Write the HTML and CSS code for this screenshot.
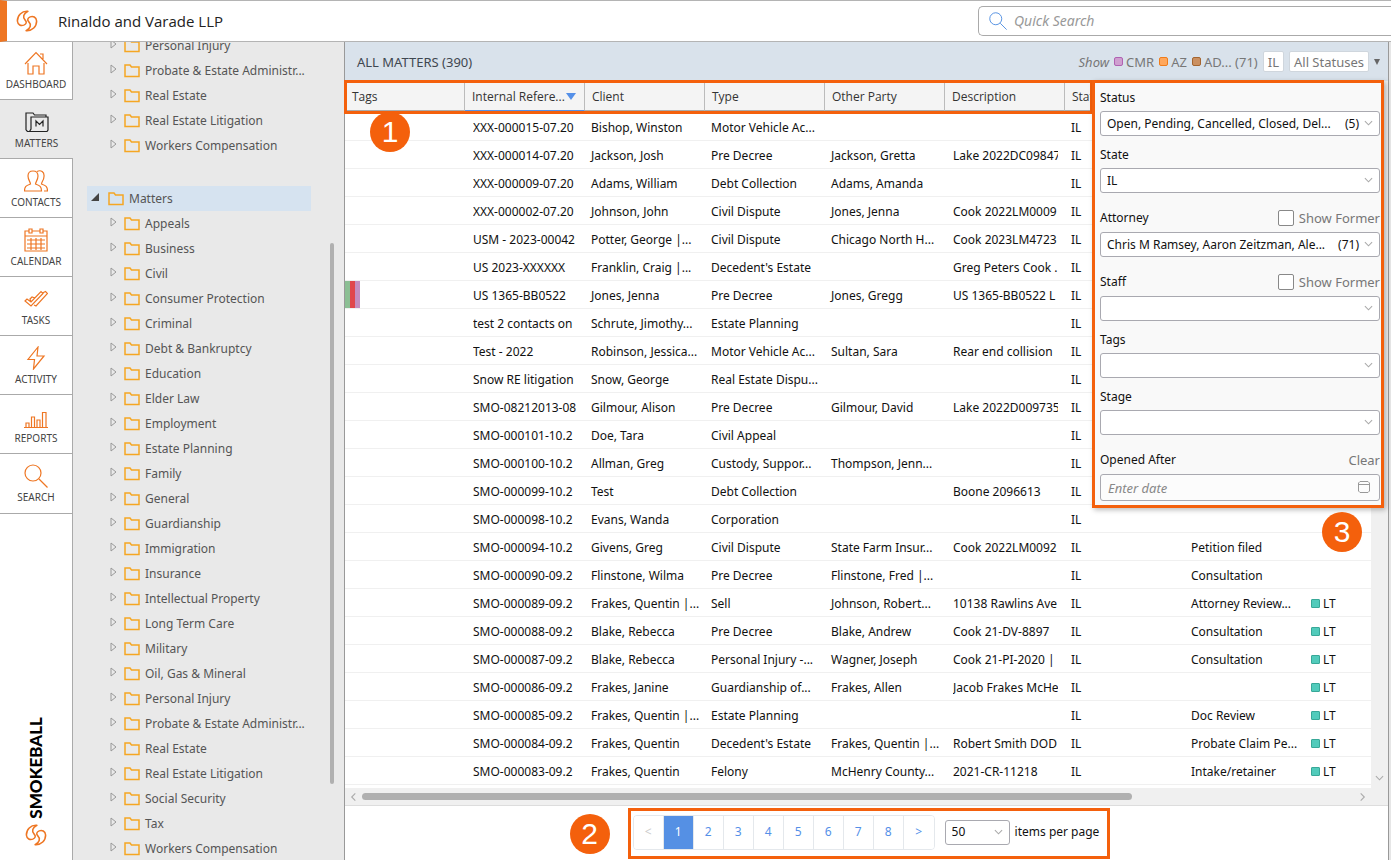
FILE: index.html
```html
<!DOCTYPE html>
<html lang="en">
<head>
<meta charset="utf-8">
<title>Matters - Rinaldo and Varade LLP</title>
<link rel="stylesheet" href="styles.css">
</head>
<body>
<svg class="sprite" aria-hidden="true">
  <symbol id="logo" viewBox="0 0 24 24"><g fill="none" stroke="currentColor" stroke-width="1.7" stroke-linejoin="round"><path d="M13 1.500C6 1 1.500 6 1.500 12c.5 4.500 4 5.500 7 4.500 3-1.200 3.500-3.500 1.500-5.500C7 8 8 4 13 1.500z"/><path d="M11 22.500C18 23 22.500 18 22.500 12c-.5-4.500-4-5.500-7-4.500-3 1.200-3.500 3.500-1.500 5.500 3 3 2 7-3 9.500z"/></g></symbol>
  <symbol id="folder" viewBox="0 0 16 14"><path d="M1 12.500V1h5l1.500 2H15v9.500z" fill="none" stroke="#f5a623" stroke-width="1.500"/></symbol>
  <symbol id="closed" viewBox="0 0 7 10"><path d="M1 1v8l5-4z" fill="none" stroke="#999"/></symbol>
  <symbol id="chev" viewBox="0 0 10 6"><path d="M1 1l4 4 4-4" fill="none" stroke="#aaa" stroke-width="1.200"/></symbol>
  <symbol id="glass" viewBox="0 0 24 24"><g fill="none" stroke="currentColor" stroke-width="1.200"><circle cx="9" cy="9" r="8"/><path d="M15 15l8.500 8.500"/></g></symbol>
</svg>
<div class="app">
  <header class="topbar">
    <svg class="topbar-logo"><use href="#logo"/></svg>
    <h1 class="firm">Rinaldo and Varade LLP</h1>
    <label class="quick"><svg class="quick-icon"><use href="#glass"/></svg><input type="search" placeholder="Quick Search" aria-label="Quick Search"></label>
  </header>
  <div class="body">
    <nav class="rail">
      <a class="rail-item first" href="#"><svg viewBox="0 0 24 24"><path d="M1 13L12 1.500 23 13M16 3h3v5M4 12v11h5v-8h6v8h5V12"/></svg>DASHBOARD</a>
      <a class="rail-item active" href="#"><svg viewBox="0 0 24 24"><path d="M1 20V3h7l1.500 2H21v2M1 20l1.500 1.500H22L23 20V7H6v12l-1.500 2.500M11 16.500V11l3.500 3.500L18 11v5.500"/></svg>MATTERS</a>
      <a class="rail-item" href="#"><svg viewBox="0 0 24 24"><path d="M.5 22c0-5 2-5.500 6-7 0-2-2.500-4-2.500-8 0-3.500 2-5 5-5s5 1.500 5 5c0 4-2.500 6-2.500 8 4 1.500 6 2 6 7zM13 2.500c4-2 7.500.5 7 5 0 3.500-2.500 5.500-2.500 7.500 4 1.500 6 2 6 7H20"/></svg>CONTACTS</a>
      <a class="rail-item" href="#"><svg viewBox="0 0 24 24"><path d="M5 3H1v20h22V3h-4M8 3h8M5 1h3v4H5zM16 1h3v4h-3zM1 8h22M3 12h18M3 16h18M3 20h18M7 10v12M12 10v12M17 10v12"/></svg>CALENDAR</a>
      <a class="rail-item" href="#"><svg viewBox="0 0 24 24"><path d="M1 14l2-2 4 3L17 4.500l2 2L7 19zM7 15l-1-3 2-2 3 1M10 18l2 1L23.500 6.500l-2-2-3 1.500"/></svg>TASKS</a>
      <a class="rail-item" href="#"><svg viewBox="0 0 24 24"><path d="M14 1L4 13.500h6.500L9.500 23 20 10h-7z"/></svg>ACTIVITY</a>
      <a class="rail-item" href="#"><svg viewBox="0 0 24 24"><path d="M0 22.500h24M2 22v-4h3v4M7.500 22V12h3v10M13 22v-7h3v7M18.500 22V7.500h3.500V22"/></svg>REPORTS</a>
      <a class="rail-item last" href="#"><svg viewBox="0 0 24 24"><circle cx="9" cy="9" r="8"/><path d="M15 15l8.500 8.500"/></svg>SEARCH</a>
      <div class="brand"><span class="brand-name">SMOKEBALL</span><svg class="brand-logo"><use href="#logo"/></svg></div>
    </nav>
    <aside class="side">
      <div class="tree">
        <ul class="branch cut">
          <li><svg class="tri"><use href="#closed"/></svg><svg class="fold"><use href="#folder"/></svg>Personal Injury</li>
          <li><svg class="tri"><use href="#closed"/></svg><svg class="fold"><use href="#folder"/></svg>Probate &amp; Estate Administr...</li>
          <li><svg class="tri"><use href="#closed"/></svg><svg class="fold"><use href="#folder"/></svg>Real Estate</li>
          <li><svg class="tri"><use href="#closed"/></svg><svg class="fold"><use href="#folder"/></svg>Real Estate Litigation</li>
          <li><svg class="tri"><use href="#closed"/></svg><svg class="fold"><use href="#folder"/></svg>Workers Compensation</li>
        </ul>
        <div class="root"><svg class="tri open" viewBox="0 0 8 8"><path d="M8 0v8H0z" fill="#444"/></svg><svg class="fold"><use href="#folder"/></svg>Matters</div>
        <ul class="branch">
          <li><svg class="tri"><use href="#closed"/></svg><svg class="fold"><use href="#folder"/></svg>Appeals</li>
          <li><svg class="tri"><use href="#closed"/></svg><svg class="fold"><use href="#folder"/></svg>Business</li>
          <li><svg class="tri"><use href="#closed"/></svg><svg class="fold"><use href="#folder"/></svg>Civil</li>
          <li><svg class="tri"><use href="#closed"/></svg><svg class="fold"><use href="#folder"/></svg>Consumer Protection</li>
          <li><svg class="tri"><use href="#closed"/></svg><svg class="fold"><use href="#folder"/></svg>Criminal</li>
          <li><svg class="tri"><use href="#closed"/></svg><svg class="fold"><use href="#folder"/></svg>Debt &amp; Bankruptcy</li>
          <li><svg class="tri"><use href="#closed"/></svg><svg class="fold"><use href="#folder"/></svg>Education</li>
          <li><svg class="tri"><use href="#closed"/></svg><svg class="fold"><use href="#folder"/></svg>Elder Law</li>
          <li><svg class="tri"><use href="#closed"/></svg><svg class="fold"><use href="#folder"/></svg>Employment</li>
          <li><svg class="tri"><use href="#closed"/></svg><svg class="fold"><use href="#folder"/></svg>Estate Planning</li>
          <li><svg class="tri"><use href="#closed"/></svg><svg class="fold"><use href="#folder"/></svg>Family</li>
          <li><svg class="tri"><use href="#closed"/></svg><svg class="fold"><use href="#folder"/></svg>General</li>
          <li><svg class="tri"><use href="#closed"/></svg><svg class="fold"><use href="#folder"/></svg>Guardianship</li>
          <li><svg class="tri"><use href="#closed"/></svg><svg class="fold"><use href="#folder"/></svg>Immigration</li>
          <li><svg class="tri"><use href="#closed"/></svg><svg class="fold"><use href="#folder"/></svg>Insurance</li>
          <li><svg class="tri"><use href="#closed"/></svg><svg class="fold"><use href="#folder"/></svg>Intellectual Property</li>
          <li><svg class="tri"><use href="#closed"/></svg><svg class="fold"><use href="#folder"/></svg>Long Term Care</li>
          <li><svg class="tri"><use href="#closed"/></svg><svg class="fold"><use href="#folder"/></svg>Military</li>
          <li><svg class="tri"><use href="#closed"/></svg><svg class="fold"><use href="#folder"/></svg>Oil, Gas &amp; Mineral</li>
          <li><svg class="tri"><use href="#closed"/></svg><svg class="fold"><use href="#folder"/></svg>Personal Injury</li>
          <li><svg class="tri"><use href="#closed"/></svg><svg class="fold"><use href="#folder"/></svg>Probate &amp; Estate Administr...</li>
          <li><svg class="tri"><use href="#closed"/></svg><svg class="fold"><use href="#folder"/></svg>Real Estate</li>
          <li><svg class="tri"><use href="#closed"/></svg><svg class="fold"><use href="#folder"/></svg>Real Estate Litigation</li>
          <li><svg class="tri"><use href="#closed"/></svg><svg class="fold"><use href="#folder"/></svg>Social Security</li>
          <li><svg class="tri"><use href="#closed"/></svg><svg class="fold"><use href="#folder"/></svg>Tax</li>
          <li><svg class="tri"><use href="#closed"/></svg><svg class="fold"><use href="#folder"/></svg>Workers Compensation</li>
        </ul>
      </div>
      <div class="side-thumb"></div>
    </aside>
    <main class="main">
      <div class="headbar">
        <h2>ALL MATTERS (390)</h2>
        <div class="summary">
          <em>Show</em>
          <span class="who"><i class="sw cmr"></i>CMR</span><span class="who"><i class="sw az"></i>AZ</span><span class="who"><i class="sw ad"></i>AD... (71)</span>
          <span class="chip">IL</span><span class="chip">All Statuses</span>
          <svg class="drop" viewBox="0 0 6 6"><path d="M0 0h6L3 6z" fill="#666"/></svg>
        </div>
      </div>
      <div class="grid">
        <table>
          <colgroup><col><col><col><col><col><col><col><col><col class="c-last"></colgroup>
          <thead><tr><th>Tags</th><th class="sorted"><span>Internal Refere...<svg viewBox="0 0 10 7"><path d="M0 0h10L5 7z" fill="#5590e8"/></svg></span></th><th>Client</th><th>Type</th><th>Other Party</th><th>Description</th><th>State</th><th></th><th></th></tr></thead>
          <tbody>
            <tr><td></td><td><span>XXX-000015-07.20</span></td><td>Bishop, Winston</td><td>Motor Vehicle Ac...</td><td></td><td></td><td>IL</td><td></td><td></td></tr>
            <tr><td></td><td><span>XXX-000014-07.20</span></td><td>Jackson, Josh</td><td>Pre Decree</td><td>Jackson, Gretta</td><td><span>Lake 2022DC09847</span></td><td>IL</td><td></td><td></td></tr>
            <tr><td></td><td><span>XXX-000009-07.20</span></td><td>Adams, William</td><td>Debt Collection</td><td>Adams, Amanda</td><td></td><td>IL</td><td></td><td></td></tr>
            <tr><td></td><td><span>XXX-000002-07.20</span></td><td>Johnson, John</td><td>Civil Dispute</td><td>Jones, Jenna</td><td><span>Cook 2022LM0009</span></td><td>IL</td><td></td><td></td></tr>
            <tr><td></td><td><span>USM - 2023-00042</span></td><td>Potter, George |...</td><td>Civil Dispute</td><td>Chicago North H...</td><td><span>Cook 2023LM4723</span></td><td>IL</td><td></td><td></td></tr>
            <tr><td></td><td><span>US 2023-XXXXXX</span></td><td>Franklin, Craig |...</td><td>Decedent's Estate</td><td></td><td><span>Greg Peters Cook .</span></td><td>IL</td><td></td><td></td></tr>
            <tr><td class="tags"><div><i class="t-green"></i><i class="t-red"></i><i class="t-violet"></i></div></td><td><span>US 1365-BB0522</span></td><td>Jones, Jenna</td><td>Pre Decree</td><td>Jones, Gregg</td><td><span>US 1365-BB0522 L</span></td><td>IL</td><td></td><td></td></tr>
            <tr><td></td><td><span>test 2 contacts on</span></td><td>Schrute, Jimothy...</td><td>Estate Planning</td><td></td><td></td><td>IL</td><td></td><td></td></tr>
            <tr><td></td><td><span>Test - 2022</span></td><td>Robinson, Jessica...</td><td>Motor Vehicle Ac...</td><td>Sultan, Sara</td><td><span>Rear end collision</span></td><td>IL</td><td></td><td></td></tr>
            <tr><td></td><td><span>Snow RE litigation</span></td><td>Snow, George</td><td>Real Estate Dispu...</td><td></td><td></td><td>IL</td><td></td><td></td></tr>
            <tr><td></td><td><span>SMO-08212013-08</span></td><td>Gilmour, Alison</td><td>Pre Decree</td><td>Gilmour, David</td><td><span>Lake 2022D009735</span></td><td>IL</td><td></td><td></td></tr>
            <tr><td></td><td><span>SMO-000101-10.2</span></td><td>Doe, Tara</td><td>Civil Appeal</td><td></td><td></td><td>IL</td><td></td><td></td></tr>
            <tr><td></td><td><span>SMO-000100-10.2</span></td><td>Allman, Greg</td><td>Custody, Suppor...</td><td>Thompson, Jenn...</td><td></td><td>IL</td><td></td><td></td></tr>
            <tr><td></td><td><span>SMO-000099-10.2</span></td><td>Test</td><td>Debt Collection</td><td></td><td><span>Boone 2096613</span></td><td>IL</td><td></td><td></td></tr>
            <tr><td></td><td><span>SMO-000098-10.2</span></td><td>Evans, Wanda</td><td>Corporation</td><td></td><td></td><td>IL</td><td></td><td></td></tr>
            <tr><td></td><td><span>SMO-000094-10.2</span></td><td>Givens, Greg</td><td>Civil Dispute</td><td>State Farm Insur...</td><td><span>Cook 2022LM0092</span></td><td>IL</td><td>Petition filed</td><td></td></tr>
            <tr><td></td><td><span>SMO-000090-09.2</span></td><td>Flinstone, Wilma</td><td>Pre Decree</td><td>Flinstone, Fred |...</td><td></td><td>IL</td><td>Consultation</td><td></td></tr>
            <tr><td></td><td><span>SMO-000089-09.2</span></td><td>Frakes, Quentin |...</td><td>Sell</td><td>Johnson, Robert...</td><td><span>10138 Rawlins Ave</span></td><td>IL</td><td>Attorney Review...</td><td><i class="lt"></i>LT</td></tr>
            <tr><td></td><td><span>SMO-000088-09.2</span></td><td>Blake, Rebecca</td><td>Pre Decree</td><td>Blake, Andrew</td><td><span>Cook 21-DV-8897</span></td><td>IL</td><td>Consultation</td><td><i class="lt"></i>LT</td></tr>
            <tr><td></td><td><span>SMO-000087-09.2</span></td><td>Blake, Rebecca</td><td>Personal Injury -...</td><td>Wagner, Joseph</td><td><span>Cook 21-PI-2020 |</span></td><td>IL</td><td>Consultation</td><td><i class="lt"></i>LT</td></tr>
            <tr><td></td><td><span>SMO-000086-09.2</span></td><td>Frakes, Janine</td><td>Guardianship of...</td><td>Frakes, Allen</td><td><span>Jacob Frakes McHe</span></td><td>IL</td><td></td><td><i class="lt"></i>LT</td></tr>
            <tr><td></td><td><span>SMO-000085-09.2</span></td><td>Frakes, Quentin |...</td><td>Estate Planning</td><td></td><td></td><td>IL</td><td>Doc Review</td><td><i class="lt"></i>LT</td></tr>
            <tr><td></td><td><span>SMO-000084-09.2</span></td><td>Frakes, Quentin</td><td>Decedent's Estate</td><td>Frakes, Quentin |...</td><td><span>Robert Smith DOD</span></td><td>IL</td><td>Probate Claim Pe...</td><td><i class="lt"></i>LT</td></tr>
            <tr><td></td><td><span>SMO-000083-09.2</span></td><td>Frakes, Quentin</td><td>Felony</td><td>McHenry County...</td><td><span>2021-CR-11218</span></td><td>IL</td><td>Intake/retainer</td><td><i class="lt"></i>LT</td></tr>
          </tbody>
        </table>
        <div class="vscroll"><svg class="chev"><use href="#chev"/></svg></div>
      </div>
      <div class="hscroll"><svg class="chev left"><use href="#chev"/></svg><div class="track"><div class="thumb"></div></div><svg class="chev right"><use href="#chev"/></svg></div>
      <footer class="foot">
        <span class="num">2</span>
        <div class="pager">
          <div class="pages"><button class="off" disabled>&lt;</button><button class="on">1</button><button>2</button><button>3</button><button>4</button><button>5</button><button>6</button><button>7</button><button>8</button><button>&gt;</button></div>
          <div class="pick per"><select id="per"><option>50</option></select><svg class="chev"><use href="#chev"/></svg></div>
          <label for="per">items per page</label>
        </div>
      </footer>
      <div class="mark-head"></div>
      <span class="num one">1</span>
      <section class="filters">
        <div class="field"><div class="cap"><label for="status">Status</label></div><div class="pick"><select id="status"><option>Open, Pending, Cancelled, Closed, Del...</option></select><span class="count">(5)</span><svg class="chev"><use href="#chev"/></svg></div></div>
        <div class="field"><div class="cap"><label for="state">State</label></div><div class="pick"><select id="state"><option>IL</option></select><svg class="chev"><use href="#chev"/></svg></div></div>
        <div class="field roomy"><div class="cap"><label for="attorney">Attorney</label><label class="former"><input type="checkbox">Show Former</label></div><div class="pick"><select id="attorney"><option>Chris M Ramsey, Aaron Zeitzman, Ale...</option></select><span class="count">(71)</span><svg class="chev"><use href="#chev"/></svg></div></div>
        <div class="field roomy"><div class="cap"><label for="staff">Staff</label><label class="former"><input type="checkbox">Show Former</label></div><div class="pick"><select id="staff"><option></option></select><svg class="chev"><use href="#chev"/></svg></div></div>
        <div class="field"><div class="cap"><label for="tags">Tags</label></div><div class="pick"><select id="tags"><option></option></select><svg class="chev"><use href="#chev"/></svg></div></div>
        <div class="field"><div class="cap"><label for="stage">Stage</label></div><div class="pick"><select id="stage"><option></option></select><svg class="chev"><use href="#chev"/></svg></div></div>
        <div class="field roomy"><div class="cap"><label for="opened">Opened After</label><button class="clear">Clear</button></div><div class="pick date"><input id="opened" type="text" placeholder="Enter date"><svg class="cal" viewBox="0 0 12 12"><path d="M2 .5h8L11.500 2v8L10 11.500H2L.5 10V2zM.5 3.500h11" fill="none" stroke="#999"/></svg></div></div>
      </section>
      <span class="num three">3</span>
    </main>
    <div class="edge"></div>
  </div>
</div>
</body>
</html>
```
FILE: styles.css
```css
* { box-sizing: border-box; }
body { margin: 0; font: 12px/20px "Noto Sans", "Open Sans", sans-serif; color: #111; background: #fff; }
ul { list-style: none; margin: 0; padding: 0; }
h1, h2 { margin: 0; font-weight: 400; }
a { color: inherit; text-decoration: none; }
button, input, select { font: inherit; color: inherit; }
svg { display: block; flex: none; }
.sprite { position: absolute; width: 0; height: 0; }

.app { display: flex; flex-direction: column; height: 100vh; overflow: hidden; }
.topbar { display: flex; align-items: center; flex: none; height: 42px; padding-left: 9px; border-top: 1px solid #b4b4b4; border-bottom: 1px solid #b4b4b4; border-left: 7px solid #ee7623; overflow: hidden; }
.topbar-logo { width: 22px; height: 22px; color: #ee7623; }
.firm { margin-left: 20px; font: 15px/20px "Open Sans", sans-serif; color: #222; }
.quick { display: flex; align-items: center; gap: 7px; width: 413px; height: 30px; margin-left: auto; padding-left: 10px; border: 1px solid #aaa; border-right: 0; border-radius: 5px 0 0 5px; }
.quick-icon { width: 18px; height: 18px; color: #4a8ae0; }
.quick input { flex: 1; min-width: 0; padding: 0; border: 0; outline: 0; background: none; font-size: 14px; font-style: italic; }
.quick input::placeholder { color: #999; opacity: 1; }

.body { display: flex; flex: 1; min-height: 0; }
.rail { display: flex; flex-direction: column; flex: none; width: 73px; border-right: 1px solid #aaa; background: #fff; }
.rail-item { display: flex; flex-direction: column; align-items: center; justify-content: flex-end; flex: none; height: 59px; padding-bottom: 6px; border-bottom: 1px solid #aaa; font: 10px/18px "Noto Sans", sans-serif; color: #444; }
.rail-item.first { height: 58px; }
.rail-item.last { height: 60px; padding-bottom: 7px; }
.rail-item svg { width: 24px; height: 24px; fill: none; stroke: #ee7623; stroke-width: 1.2; }
.rail-item.active { width: 73px; background: #e9e9e9; }
.rail-item.active svg { stroke: #222; }
.brand { display: flex; flex-direction: column; align-items: center; gap: 5px; margin-top: auto; padding-bottom: 14px; }
.brand-name { writing-mode: vertical-rl; transform: rotate(180deg); font: 900 17px/20px Lato, sans-serif; color: #000; }
.brand-logo { width: 22px; height: 22px; color: #ee7623; }

.side { position: relative; flex: none; width: 272px; padding-left: 14px; border-right: 1px solid #999; background: #e9e9e9; overflow: hidden; color: #555; }
.tree { width: 224px; }
.branch li, .root { display: flex; align-items: center; height: 25px; white-space: nowrap; }
.branch li { padding-left: 23px; }
.branch.cut { margin: -9px 0 28px; }
.root { padding-left: 4px; background: #d6e3f0; }
.tri { width: 7px; height: 10px; margin-right: 7px; margin-bottom: 3px; }
.tri.open { width: 8px; height: 8px; margin-right: 9px; }
.fold { width: 16px; height: 14px; margin-right: 5px; }
.side-thumb { position: absolute; top: 201px; bottom: 76px; right: 10px; width: 4px; border-radius: 2px; background: #b0b0b0; }

.main { position: relative; display: flex; flex-direction: column; flex: 1; min-width: 0; border-right: 1px solid #999; }
.headbar { display: flex; align-items: center; justify-content: space-between; flex: none; height: 39px; padding: 0 8px 0 12px; background: #d9e2eb; }
.headbar h2 { font-size: 13px; color: #3f4750; }
.summary { display: flex; align-items: center; gap: 5px; font-size: 13px; color: #777; }
.who { display: flex; align-items: center; gap: 3px; }
.sw { width: 9px; height: 9px; border: 1px solid; border-radius: 2px; }
.cmr { background: #cf9fd0; border-color: #b062b2; }
.az { background: #ffa75c; border-color: #f07c1a; }
.ad { background: #cb9061; border-color: #a5652f; }
.chip { height: 21px; padding: 0 4px; border: 1px solid #cfd6dd; border-radius: 2px; background: #fff; }
.drop { width: 6px; height: 6px; }

.grid { display: flex; flex: 1; min-height: 0; overflow: hidden; background: #fff; }
table { flex: 1; width: 100%; min-width: 0; height: max-content; table-layout: fixed; border-collapse: separate; border-spacing: 0; white-space: nowrap; }
.c-last { width: 66px; }
th { height: 30px; padding: 2px 7px 0; border-right: 1px solid #bbb; border-bottom: 1px solid #aaa; background: #f4f4f4; font: 12px/20px "Open Sans", sans-serif; text-align: left; color: #333; }
th.sorted { border-bottom: 1px solid #5590e8; }
th.sorted span { display: flex; align-items: center; justify-content: space-between; }
th.sorted svg { width: 10px; height: 7px; margin-right: 1px; }
td { height: 28px; padding: 2px 5px 0 6px; border-bottom: 1px solid #f0f0f0; overflow: hidden; }
td:nth-child(2), td:nth-child(6) { padding: 2px 7px 0 8px; }
tbody tr:first-child td { height: 30px; border-top: 2px solid #fff; }
td span { display: block; overflow: hidden; }
td.tags { padding: 0; }
.tags div { display: flex; height: 27px; }
.tags i { width: 5px; }
.t-green { background: #8cbf94; }
.t-red { background: #e0474c; }
.t-violet { background: #c48dc0; }
.lt { display: inline-block; width: 9px; height: 9px; margin-right: 3px; border: 1px solid #38a898; border-radius: 1px; background: #51cbbb; }
.vscroll { display: flex; align-items: flex-end; justify-content: center; flex: none; width: 17px; padding-bottom: 7px; background: #f0f0f0; }
.chev { width: 9px; height: 6px; }
.hscroll { display: flex; align-items: center; flex: none; height: 18px; padding: 0 21px 0 4px; border-bottom: 1px solid #ddd; background: #f0f0f0; }
.track { flex: 1; }
.thumb { width: 77%; height: 7px; margin-left: 4px; border-radius: 4px; background: #b0b0b0; }
.chev.left { transform: rotate(90deg); }
.chev.right { transform: rotate(-90deg); }

.foot { display: flex; align-items: flex-start; justify-content: center; gap: 18px; flex: none; height: 54px; padding-top: 2px; padding-right: 53px; }
.foot .num { margin-top: 6px; }
.pager { display: flex; align-items: center; gap: 5px; height: 51px; padding: 0 8px 3px 2px; border: 3px solid #f4600c; }
.pages { display: flex; margin-right: 5px; border: 1px solid #e4e8ec; border-radius: 4px; overflow: hidden; }
.pages button { width: 30px; height: 33px; padding: 0; border: 0; border-right: 1px solid #e4e8ec; background: #fff; color: #5590e8; }
.pages button:last-child { border-right: 0; }
.pages .on { background: #5590e4; color: #fff; }
.pages .off { color: #ccc; }

.num { display: grid; place-items: center; width: 40px; height: 40px; border-radius: 50%; background: #f4600c; color: #fff; font: 30px/40px "Liberation Sans", sans-serif; }
.one { position: absolute; top: 70px; left: 25px; }
.three { position: absolute; top: 470px; right: 26px; }
.mark-head { position: absolute; top: 38px; left: -1px; right: 295px; height: 34px; border: 3px solid #f4600c; }

.filters { position: absolute; top: 38px; right: 4px; width: 292px; padding: 5px 1px 4px 5px; border: 3px solid #f4600c; background: #f9f9f9; box-shadow: 2px 2px 5px #0004; }
.field + .field { margin-top: 9px; }
.field + .roomy { margin-top: 15px; }
.cap { display: flex; align-items: center; justify-content: space-between; height: 20px; margin-bottom: 3px; line-height: 22px; }
.roomy .cap { margin-bottom: 4px; }
.former { display: flex; align-items: center; gap: 5px; font-size: 13px; line-height: 20px; color: #777; }
.former input { appearance: none; width: 16px; height: 16px; margin: 0; border: 1px solid #888; border-radius: 2px; background: #fff; }
.clear { padding: 0; border: 0; background: none; font-size: 13px; color: #777; }
.pick { position: relative; }
.pick select, .pick input { display: block; width: 100%; height: 25px; padding: 0 6px; border: 1px solid #a9a9b0; border-radius: 3px; outline: 0; background: #fff; appearance: none; }
.pick.date input { height: 27px; padding-left: 7px; background: #fcfcfc; font-size: 13px; font-style: italic; }
.pick input::placeholder { color: #888; opacity: 1; }
.pick .chev { position: absolute; right: 7px; top: 9px; }
.count { position: absolute; right: 21px; top: 3px; }
.cal { position: absolute; right: 10px; top: 7px; width: 12px; height: 12px; }
.per { width: 65px; }
.edge { flex: none; width: 2px; background: #e6e6e6; }
```
